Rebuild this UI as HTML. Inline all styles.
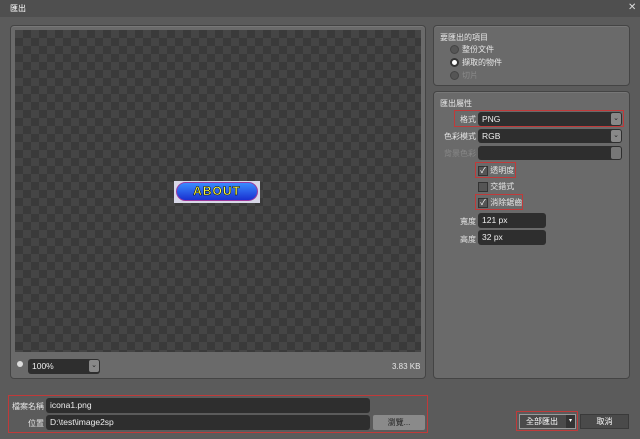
<!DOCTYPE html>
<html><head><meta charset="utf-8"><style>
*{box-sizing:border-box;margin:0;padding:0}
body{width:640px;height:439px;background:#5b5b5b;font-family:"Liberation Sans","Noto Sans CJK TC",sans-serif;font-size:8px;color:#e6e6e6;position:relative;overflow:hidden}
.a{position:absolute;white-space:nowrap}
.r{text-align:right}
.panel{background:#6a6a6a;border:1px solid #444;border-radius:4px;box-shadow:inset 0 1px 0 #777}
.inp{background:#2e2e2e;border-radius:3px;color:#eee;padding-left:4px;line-height:14px;height:14px;font-size:8.5px}
.dd{position:absolute;right:1px;top:1px;width:10px;height:12px;background:#888;border-radius:2px;color:#222;font-size:7px;text-align:center;line-height:12px}
.red{border:1px solid #c03a3a}
.cb{width:10px;height:10px;background:#555;border:1px solid #333;display:inline-block;vertical-align:middle;color:#fff;font-size:8px;line-height:8px;text-align:center}
.rd{width:9px;height:9px;border-radius:50%;background:#555;border:1px solid #444;display:inline-block;vertical-align:middle;margin-right:3px}
</style></head><body>
<div class="a" style="left:0;top:0;width:640px;height:17px;background:#4f4f4f"></div>
<div class="a" style="left:10px;top:3px;color:#fff">匯出</div>
<div class="a" style="left:628px;top:2px;color:#ddd;font-size:10px">✕</div>

<div class="a panel" style="left:10px;top:25px;width:416px;height:354px"></div>
<div class="a" style="left:15px;top:30px;width:406px;height:322px;background:conic-gradient(#3a3a3a 25%,#454545 0 50%,#3a3a3a 0 75%,#454545 0);background-size:16px 16px"></div>
<div class="a" style="left:174px;top:181px;width:86px;height:22px;background:#d8d8e8"></div>
<div class="a" style="left:176px;top:182px;width:82px;height:19px;border-radius:10px;background:linear-gradient(#3a8cff,#1a30d0);border:1px solid #9a3aa0;color:#ffff40;font-weight:bold;font-size:12px;text-align:center;line-height:17px;letter-spacing:1px;-webkit-text-stroke:0.5px #000">ABOUT</div>
<div class="a" style="left:17px;top:361px;width:6px;height:6px;border-radius:50%;background:#ddd"></div>
<div class="a inp" style="left:28px;top:359px;width:72px;height:15px">100%<div class="dd">⌄</div></div>
<div class="a" style="left:392px;top:362px;font-size:8px">3.83 KB</div>

<div class="a panel" style="left:433px;top:25px;width:197px;height:61px"></div>
<div class="a" style="left:440px;top:32px">要匯出的項目</div>
<div class="a" style="left:450px;top:44px"><span class="rd"></span>整份文件</div>
<div class="a" style="left:450px;top:57px"><span class="rd" style="background:#fff;border:2px solid #333"></span>擷取的物件</div>
<div class="a" style="left:450px;top:70px;color:#8a8a8a"><span class="rd"></span>切片</div>

<div class="a panel" style="left:433px;top:91px;width:197px;height:288px"></div>
<div class="a" style="left:440px;top:98px">匯出屬性</div>
<div class="a red" style="left:454px;top:110px;width:170px;height:17px"></div>
<div class="a r" style="left:436px;width:40px;top:114px">格式</div>
<div class="a inp" style="left:478px;top:112px;width:144px">PNG<div class="dd">⌄</div></div>
<div class="a r" style="left:436px;width:40px;top:131px">色彩模式</div>
<div class="a inp" style="left:478px;top:129px;width:144px">RGB<div class="dd">⌄</div></div>
<div class="a r" style="left:436px;width:40px;top:148px;color:#888">背景色彩</div>
<div class="a inp" style="left:478px;top:146px;width:144px"><div class="dd" style="background:#777"></div></div>
<div class="a red" style="left:475px;top:162px;width:41px;height:16px"></div>
<div class="a" style="left:478px;top:165px"><span class="cb">✓</span> 透明度</div>
<div class="a" style="left:478px;top:181px"><span class="cb"></span> 交錯式</div>
<div class="a red" style="left:475px;top:194px;width:48px;height:16px"></div>
<div class="a" style="left:478px;top:197px"><span class="cb">✓</span> 消除鋸齒</div>
<div class="a r" style="left:436px;width:40px;top:216px">寬度</div>
<div class="a inp" style="left:478px;top:213px;width:68px;height:15px">121 px</div>
<div class="a r" style="left:436px;width:40px;top:234px">高度</div>
<div class="a inp" style="left:478px;top:230px;width:68px;height:15px">32 px</div>

<div class="a red" style="left:8px;top:395px;width:420px;height:38px"></div>
<div class="a r" style="left:4px;width:40px;top:401px">檔案名稱</div>
<div class="a inp" style="left:46px;top:398px;width:324px;height:15px">icona1.png</div>
<div class="a r" style="left:4px;width:40px;top:418px">位置</div>
<div class="a inp" style="left:46px;top:415px;width:324px;height:15px">D:\test\image2sp</div>
<div class="a" style="left:373px;top:415px;width:52px;height:15px;background:#8a8a8a;border-radius:2px;color:#222;text-align:center;line-height:15px">瀏覽...</div>

<div class="a red" style="left:516px;top:411px;width:62px;height:20px"></div>
<div class="a" style="left:519px;top:414px;width:57px;height:15px;background:#4a4a4a;border:1px solid #999;color:#fff;line-height:13px;padding-left:6px">全部匯出<span style="position:absolute;right:0;top:0;width:9px;height:13px;background:#333;font-size:6px;text-align:center">▾</span></div>
<div class="a" style="left:580px;top:414px;width:49px;height:15px;background:#4a4a4a;border:1px solid #3a3a3a;color:#fff;line-height:13px;text-align:center">取消</div>
</body></html>
